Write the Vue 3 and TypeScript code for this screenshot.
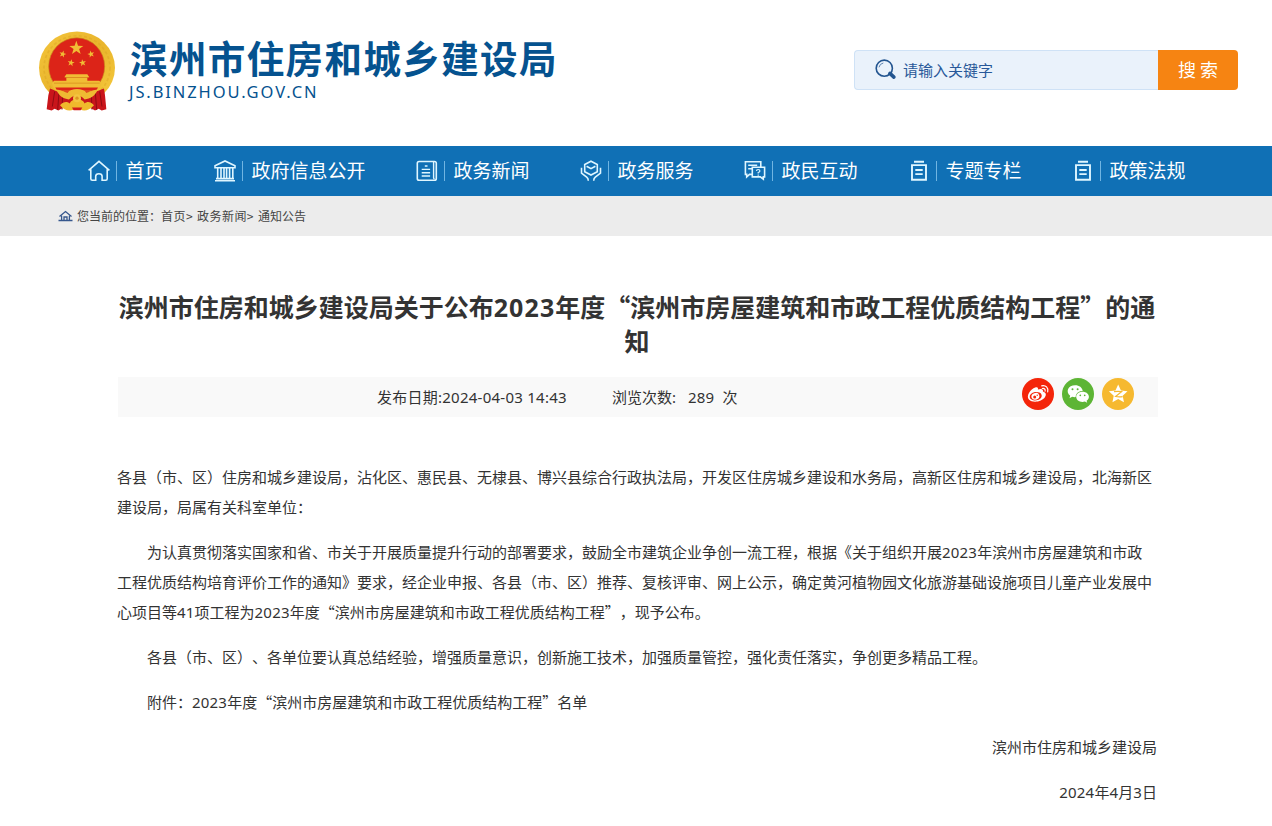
<script setup lang="ts">
interface NavItem { label: string; icon: string }
interface Part { text: string; latin: boolean }

const navItems: NavItem[] = [
  { label: '首页', icon: 'home' },
  { label: '政府信息公开', icon: 'bank' },
  { label: '政务新闻', icon: 'news' },
  { label: '政务服务', icon: 'service' },
  { label: '政民互动', icon: 'chat' },
  { label: '专题专栏', icon: 'board' },
  { label: '政策法规', icon: 'board' },
]

const titleLines = ['滨州市住房和城乡建设局关于公布2023年度“滨州市房屋建筑和市政工程优质结构工程”的通', '知']

const paragraphs: { lines: string[]; kind: string }[] = [
  { kind: 'plain', lines: [
    '各县（市、区）住房和城乡建设局，沾化区、惠民县、无棣县、博兴县综合行政执法局，开发区住房城乡建设和水务局，高新区住房和城乡建设局，北海新区',
    '建设局，局属有关科室单位：',
  ] },
  { kind: 'indent', lines: [
    '为认真贯彻落实国家和省、市关于开展质量提升行动的部署要求，鼓励全市建筑企业争创一流工程，根据《关于组织开展2023年滨州市房屋建筑和市政',
    '工程优质结构培育评价工作的通知》要求，经企业申报、各县（市、区）推荐、复核评审、网上公示，确定黄河植物园文化旅游基础设施项目儿童产业发展中',
    '心项目等41项工程为2023年度“滨州市房屋建筑和市政工程优质结构工程”，现予公布。',
  ] },
  { kind: 'indent', lines: ['各县（市、区）、各单位要认真总结经验，增强质量意识，创新施工技术，加强质量管控，强化责任落实，争创更多精品工程。'] },
  { kind: 'indent', lines: ['附件：2023年度“滨州市房屋建筑和市政工程优质结构工程”名单'] },
  { kind: 'right', lines: ['滨州市住房和城乡建设局'] },
  { kind: 'right', lines: ['2024年4月3日'] },
]

// Numbers use a Latin face; Chinese text and punctuation keep full-width metrics.
function split(text: string): Part[] {
  return text.split(/(\d+)/).filter(Boolean).map((t) => ({ text: t, latin: /^\d/.test(t) }))
}

function star(cx: number, cy: number, r: number, rot = 0, inner = 0.4): string {
  const pts: string[] = []
  for (let i = 0; i < 10; i++) {
    const a = ((i * 36 - 90 + rot) * Math.PI) / 180
    const q = i % 2 ? r * inner : r
    pts.push(`${(cx + q * Math.cos(a)).toFixed(2)},${(cy + q * Math.sin(a)).toFixed(2)}`)
  }
  return pts.join(' ')
}
</script>

<template>
  <div class="page">
    <header class="header">
      <div class="brand">
        <svg class="emblem" viewBox="24 30 234 248">
          <defs>
            <linearGradient id="gold" x1="0" y1="0" x2="1" y2="1">
              <stop offset="0" stop-color="#f4c53c" /><stop offset=".5" stop-color="#e9b52c" /><stop offset="1" stop-color="#f6cb3f" />
            </linearGradient>
          </defs>
          <ellipse cx="141" cy="143" rx="114" ry="109" fill="url(#gold)" />
          <ellipse cx="141" cy="143" rx="99" ry="96" fill="none" stroke="#d9a021" stroke-width="5" stroke-dasharray="9 7" opacity=".4" />
          <ellipse cx="140" cy="139" rx="84" ry="86" fill="#dc2418" stroke="#c98a1c" stroke-width="2" />
          <g fill="#f1bd35">
            <polygon :points="star(139, 84, 22)" />
            <polygon :points="star(98, 102, 11, 15)" />
            <polygon :points="star(183, 102, 11, -15)" />
            <polygon :points="star(123, 128, 11, 10)" />
            <polygon :points="star(158, 128, 11, -10)" />
            <path d="M109 162h63l6 9h-75z M109 172h63v10h36l6 7c-2 13-8 20-14 24H80c-7-5-12-13-14-24l6-7h37z" />
          </g>
          <path d="M72 189h137M106 172h70" stroke="#d48719" stroke-width="2" />
          <path d="M76 202h128c-2 4-4 7-6 10H82c-2-3-4-6-6-10z" fill="#dc2418" />
          <path d="M60 205c14 5 20 11 32 8l31 12h34l31-12c12 3 19-3 34-8l3 20 4 42-14 4-9-5-11 5-10-6-14-5-12 9h-38l-12-9-14 5-10 6-11-5-9 5-15-4 5-42z" fill="#c9151b" />
          <path d="M74 214l-7 45M87 217l-4 52M98 220l-2 48M184 220l2 48M196 217l4 52M209 214l7 45" stroke="#8f0c12" stroke-width="3" fill="none" />
          <path d="M79 209c12-3 23 7 34 9 9-15 47-15 56 0 11-2 22-12 34-9-8 19-22 27-39 29-17-18-30-18-47 0-17-2-30-10-38-29z" fill="#efba32" />
          <path d="M119 250c7-18 38-18 45 0 7-7 18-6 28 5-15 16-29 20-41 13h-20c-13 7-28 3-41-13 10-11 22-12 29-5z" fill="#f0b92c" />
          <path d="M126 262h31l-5 8h-21z" fill="#d21c1b" />
          <circle cx="141" cy="234" r="12" fill="#f4c440" /><circle cx="141" cy="234" r="5" fill="#dd9422" />
        </svg>
        <div class="brand-text">
          <div class="brand-name">滨州市住房和城乡建设局</div>
          <div class="brand-domain">JS.BINZHOU.GOV.CN</div>
        </div>
      </div>
      <div class="search">
        <div class="search-field">
          <svg class="search-icon" viewBox="0 0 22 22" fill="none">
            <circle cx="9.3" cy="9.2" r="8.1" stroke="#235590" stroke-width="1.6" />
            <path d="M4 8.3A5.5 5.5 0 0 1 8.3 4" stroke="#5d83b0" stroke-width="1" />
            <path d="M14.9 14.4l4 3.7" stroke="#235590" stroke-width="3.6" stroke-linecap="round" />
          </svg>
          <span class="placeholder">请输入关键字</span>
        </div>
        <div class="search-button">搜 索</div>
      </div>
    </header>

    <nav class="nav">
      <a v-for="item in navItems" :key="item.label" class="nav-item">
        <svg class="nav-icon" viewBox="0 0 22 22" fill="none" stroke="#dff6ff" stroke-width="1.6">
          <path v-if="item.icon === 'home'" d="M.6 10.4L11 1.4l10.4 9M2.8 9.2v9.6q0 1.5 1.5 1.5h3.4v-4q0-2.6 3.2-2.6t3.2 2.6v4h3.6q1.5 0 1.5-1.5V9.2" />
          <path v-else-if="item.icon === 'bank'" d="M1 5.7L11 1l10 4.7v2H1zM1 20.8h20M2 18.6h18M3.7 8v10M7 8v10M10 8v10M12.6 8v10M15.6 8v10M18.8 8v10" />
          <template v-else-if="item.icon === 'news'">
            <rect x="1.3" y="1.5" width="19" height="18.7" rx="1.8" />
            <path d="M17.6 2v15.7q0 1 1 1.3M8.8 6h2.7M5.7 9.4h8.4M5.7 12.7h8.4M5.7 16h8.4" stroke-width="1.4" />
          </template>
          <path v-else-if="item.icon === 'service'" d="M11 1.2l6.300 3.300v7.200L11 15l-6.300-3.300V4.500zM6.600 6.200L11 8.700l4.400-2.500M1.500 7.800v5.400l5.200 4q1.600 1.300 1.600 3.600M20.500 7.800v5.400l-5.200 4q-1.600 1.300-1.600 3.600" />
          <template v-else-if="item.icon === 'chat'">
            <path d="M8.2 14.4H5.500L2.700 17v-2.600H1.400V1.800h15.400v4.700M4.200 5.300h9M4.200 8.800h3.700M8.300 7.300h12.300v9.600h-1.300v2.300l-3-2.300h-8z" />
            <path d="M12.500 11q0-1.500 1.700-1.500t1.700 1.400q0 1-1.700 1.600v1.100M14.200 14.600v1.100" stroke-width="1.200" />
          </template>
          <path v-else d="M6 1.700h10M4 5.100h14v14.700H4zM7.300 10h7.400M7.300 14.100h7.400" stroke-width="1.900" />
        </svg>
        <span class="nav-label"><span>{{ item.label }}</span></span>
      </a>
    </nav>

    <div class="crumbs">
      <svg class="crumb-icon" viewBox="0 0 15 12" fill="none" stroke="#36578d" stroke-width="1.3">
        <path d="M.5 10.500h14M1.500 6.600l6-5 6 5M3.600 5.800v4.500M11.400 5.800v4.500M6 10.300V7h3v3.300" />
      </svg>
      <span>您当前的位置：</span><span class="crumb">首页&gt;</span><span class="crumb">政务新闻&gt;</span><span>通知公告</span>
    </div>

    <main class="article">
      <h1 class="title">
        <span v-for="line in titleLines" :key="line" class="line"><span v-for="(part, i) in split(line)" :key="i" :class="{ latin: part.latin }">{{ part.text }}</span></span>
      </h1>
      <div class="meta">
        <span class="date">发布日期:2024-04-03 14:43</span>
        <span class="views">浏览次数:</span>
        <span class="count">289</span>
        <span>次</span>
        <div class="share">
          <svg viewBox="0 0 32 32">
            <circle cx="16" cy="16" r="16" fill="#f4250a" />
            <path d="M13.200 9.500c2-.8 3.200 0 2.700 2 3-1.200 5.700-.7 5 2 3.200 1 3.700 3.300 2 5.700-3 4.500-12.300 6.200-16 2.200-3.200-3.600 1.700-10.200 6.300-11.900z" fill="#fff" />
            <ellipse cx="13.700" cy="18.200" rx="6.100" ry="4.200" transform="rotate(-10 13.700 18.200)" fill="#f4250a" />
            <ellipse cx="13.400" cy="18.300" rx="4" ry="3.300" transform="rotate(-20 13.400 18.300)" fill="#fff" />
            <circle cx="12.700" cy="19" r="1.500" fill="#f4250a" /><circle cx="15.200" cy="17.300" r=".7" fill="#f4250a" />
            <path d="M19.700 7.800c4-1 7 2 6 6M20.300 10.500c2-.4 3.300.8 2.800 2.700" fill="none" stroke="#fff" stroke-width="1.200" stroke-linecap="round" />
          </svg>
          <svg viewBox="0 0 32 32">
            <circle cx="16" cy="16" r="16" fill="#5db535" />
            <path d="M13.200 7.300c4 0 7.200 2.400 7.500 5.600-4-.1-7.200 2.500-7 6.200-1.400.1-2.500-.1-3.500-.4l-2.700 1.500.7-2.500c-4.900-3.600-2.300-10.400 5-10.400z" fill="#fff" />
            <path d="M20.500 13.800c3.700 0 6.400 2.200 6.400 5 0 1.600-.9 3-2.300 4l.6 2-2.300-1.200c-4.600 1.300-8.700-1.200-8.700-4.800 0-2.800 2.700-5 6.300-5z" fill="#fff" />
            <g fill="#5db535"><circle cx="10.500" cy="11.300" r="1" /><circle cx="15.600" cy="11.300" r="1" /><circle cx="18.300" cy="17.300" r=".85" /><circle cx="22.700" cy="17.300" r=".85" /></g>
          </svg>
          <svg viewBox="0 0 32 32">
            <circle cx="16" cy="16" r="16" fill="#f6b930" />
            <polygon :points="star(16.2, 16.2, 9.8, 0, 0.48)" fill="#fff" />
            <path d="M12 13.700c3-.4 5-.4 7.600 0l-6 4.800c2.500.5 4.500.5 7 .1" fill="none" stroke="#f6b930" stroke-width="1.200" />
          </svg>
        </div>
      </div>
      <div class="body">
        <p v-for="(p, n) in paragraphs" :key="n" :class="p.kind">
          <span v-for="line in p.lines" :key="line" class="line"><span v-for="(part, i) in split(line)" :key="i" :class="{ latin: part.latin }">{{ part.text }}</span></span>
        </p>
      </div>
    </main>
  </div>
</template>

<style>
body { background: #fff; overflow: hidden; }
</style>

<style scoped>
.page {
  width: 1272px; height: 826px; overflow: hidden; color: #333;
  font-family: "Noto Sans CJK SC", sans-serif; text-spacing-trim: space-all;
}
.header { height: 146px; display: flex; justify-content: space-between; padding: 0 34px 0 38px; box-sizing: border-box; }
.brand { display: flex; padding-top: 30px; }
.emblem { width: 78px; height: 83px; }
.brand-text { padding: 3px 0 0 14px; color: #05528f; }
.brand-name { font-size: 37.5px; font-weight: 700; line-height: 48px; letter-spacing: 1.4px; white-space: nowrap; }
.brand-domain { font: 16.5px/20px "Noto Sans", sans-serif; letter-spacing: 1.9px; margin: 1px 0 0 -1px; }
.search { display: flex; margin-top: 50px; height: 40px; }
.search-field {
  width: 304px; box-sizing: border-box; display: flex; align-items: center; padding-left: 20px;
  border: 1px solid #cfe2f6; border-right: 0; border-radius: 4px 0 0 4px; background: #eaf2fb; color: #285899; font-size: 15px;
}
.search-icon { width: 22px; height: 22px; margin-right: 6px; }
.placeholder { margin-top: -2px; }
.search-button { width: 80px; border-radius: 0 4px 4px 0; background: #f68412; color: #fff; font-size: 18px; line-height: 39px; text-align: center; }
.nav { height: 50px; background: #1070b5; display: flex; align-items: center; gap: 50px; padding-left: 88px; }
.nav-item { display: flex; align-items: center; color: #fff; }
.nav-icon { width: 22px; height: 22px; margin-right: 6px; }
.nav-label { font-size: 19px; height: 20px; line-height: 18px; padding-left: 8.5px; margin-right: .5px; border-left: 1px solid #70b5e2; white-space: nowrap; }
.crumbs { height: 40px; background: #ececec; display: flex; align-items: center; font-size: 12px; line-height: 38px; color: #444; padding-left: 58px; }
.crumb-icon { width: 15px; height: 12px; margin-right: 4px; }
.crumb { margin-right: 4px; letter-spacing: .45px; }
.article { width: 1040px; margin-left: 118px; padding-top: 54px; }
.line { display: block; white-space: nowrap; }
.title { margin: 0 1px 0 -1px; font-size: 25px; line-height: 33px; text-align: center; font-weight: 700; }
.latin { font-family: "Noto Sans", sans-serif; letter-spacing: .2px; }
.title .latin { letter-spacing: 1.1px; }
.meta { height: 40px; margin-top: 20px; background: #f9f9f9; display: flex; align-items: center; font: 15px/40px "Noto Sans", "Noto Sans CJK SC", sans-serif; padding-left: 259px; box-sizing: border-box; }
.date { width: 190px; margin-right: 45px; letter-spacing: .25px; white-space: nowrap; }
.views { margin-right: 12px; }
.count { margin-right: 8px; letter-spacing: .2px; }
.share { margin-left: auto; margin-right: 24px; display: flex; gap: 8px; margin-top: -6px; }
.share svg { width: 32px; height: 32px; }
.body { padding-top: 45px; font-size: 15px; line-height: 30px; margin: 0 1px 0 -1px; }
.body p { margin: 0 0 15px; }
.body .indent .line:first-child { padding-left: 30px; }
.body .right { text-align: right; }
</style>
